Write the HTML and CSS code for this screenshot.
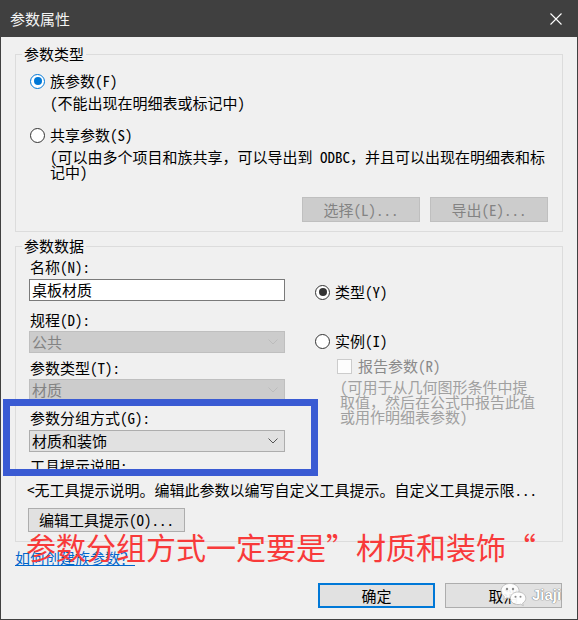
FILE: index.html
```html
<!DOCTYPE html>
<html lang="zh-CN">
<head>
<meta charset="utf-8">
<link rel="stylesheet" href="styles.css">
</head>
<body>
<div class="window">
  <div class="titlebar">
    <span class="title">参数属性</span>
    <svg class="close" width="12" height="12" viewBox="0 0 12 12"><path d="M0.5 0.5 L11.5 11.5 M11.5 0.5 L0.5 11.5" stroke="#ffffff" stroke-width="1.1" fill="none"/></svg>
  </div>
  <div class="content">
    <fieldset class="group g1">
      <legend>参数类型</legend>
      <div class="inner">
        <div class="radio-row"><span class="radio blue"><span class="dot"></span></span><span>族参数(F)</span></div>
        <div class="desc d1">(不能出现在明细表或标记中)</div>
        <div class="radio-row r2"><span class="radio"></span><span>共享参数(S)</span></div>
        <div class="desc d2">(可以由多个项目和族共享，可以导出到 ODBC，并且可以出现在明细表和标记中)</div>
        <div class="btn-row">
          <span class="btn disabled">选择(L)...</span>
          <span class="btn disabled">导出(E)...</span>
        </div>
      </div>
    </fieldset>
    <fieldset class="group g2">
      <legend>参数数据</legend>
      <div class="inner">
        <div class="data-grid">
          <div class="left-col">
            <div class="lbl l1">名称(N):</div>
            <div class="input">桌板材质</div>
            <div class="lbl l2">规程(D):</div>
            <div class="select disabled s1"><span>公共</span><svg width="10" height="6" viewBox="0 0 10 6"><polyline points="0.5,0.5 5,5 9.5,0.5" fill="none" stroke="#bcbcbc"/></svg></div>
            <div class="lbl l3">参数类型(T):</div>
            <div class="select disabled s2"><span>材质</span><svg width="10" height="6" viewBox="0 0 10 6"><polyline points="0.5,0.5 5,5 9.5,0.5" fill="none" stroke="#bcbcbc"/></svg></div>
            <div class="lbl l4">参数分组方式(G):</div>
            <div class="select s3"><span>材质和装饰</span><svg width="10" height="6" viewBox="0 0 10 6"><polyline points="0.5,0.5 5,5 9.5,0.5" fill="none" stroke="#555555"/></svg></div>
            <div class="lbl l5">工具提示说明:</div>
          </div>
          <div class="right-col">
            <div class="radio-row rr1"><span class="radio dark"><span class="dot"></span></span><span>类型(Y)</span></div>
            <div class="radio-row rr2"><span class="radio"></span><span>实例(I)</span></div>
            <div class="check-row"><span class="check"></span><span>报告参数(R)</span></div>
            <div class="note">(可用于从几何图形条件中提取值，然后在公式中报告此值或用作明细表参数)</div>
          </div>
        </div>
        <div class="tip">&lt;无工具提示说明。编辑此参数以编写自定义工具提示。自定义工具提示限...</div>
        <span class="btn edit">编辑工具提示(O)...</span>
      </div>
    </fieldset>
    <a class="help" href="#">如何创建族参数？</a>
    <div class="footer">
      <span class="btn ok">确定</span>
      <span class="btn cancel">取消</span>
    </div>
  </div>
  <div class="annot-rect"></div>
  <div class="annot-text">参数分组方式一定要是”材质和装饰“</div>
  <div class="watermark">
    <svg width="27" height="26" viewBox="0 0 27 26">
      <path d="M10 1.5 C4.8 1.5 1 4.8 1 8.8 C1 11.2 2.3 13.2 4.4 14.6 L3.6 17.4 L6.8 15.8 C7.8 16.1 8.9 16.2 10 16.2 C15.2 16.2 19 12.9 19 8.8 C19 4.8 15.2 1.5 10 1.5 Z" fill="#ffffff" fill-opacity="0.92" stroke="#b5b5b5" stroke-width="0.8"/>
      <path d="M18 10 C13.6 10 10.4 12.8 10.4 16.3 C10.4 19.8 13.6 22.6 18 22.6 C18.9 22.6 19.8 22.5 20.6 22.2 L23.3 23.6 L22.6 21.2 C24.6 20 25.8 18.3 25.8 16.3 C25.8 12.8 22.5 10 18 10 Z" fill="#ffffff" fill-opacity="0.95" stroke="#b5b5b5" stroke-width="0.8"/>
      <circle cx="7" cy="7" r="1.2" fill="#8a8a8a"/>
      <circle cx="13" cy="7" r="1.2" fill="#8a8a8a"/>
      <circle cx="15.5" cy="14.8" r="1" fill="#8a8a8a"/>
      <circle cx="20.5" cy="14.8" r="1" fill="#8a8a8a"/>
    </svg>
    <span class="wm-text">Jiaji</span>
  </div>
</div>
</body>
</html>
```
FILE: styles.css
```css
* { box-sizing: border-box; }
html, body { margin: 0; padding: 0; }
body {
  font-family: "Noto Sans Mono CJK SC", "Noto Sans CJK SC", sans-serif;
  font-size: 15px;
  line-height: 16px;
  color: #000;
  background: #f0f0f0;
}
.window {
  position: relative;
  width: 578px;
  height: 620px;
  border: 1px solid #404040;
  background: #f0f0f0;
  display: flex;
  flex-direction: column;
  overflow: hidden;
}
.titlebar {
  height: 36px;
  flex: none;
  background: #404040;
  color: #f4f4f4;
  display: flex;
  align-items: center;
  justify-content: space-between;
  padding: 0 15px 0 9px;
}
.close { display: block; }
.content { flex: 1; display: flex; flex-direction: column; }

.group {
  margin: 0 14px 0 14px;
  padding: 0;
  border: 1px solid #dcdcdc;
  min-width: 0;
}
.group legend { margin-left: 6px; padding: 0 2px; line-height: 16px; }
.g1 { margin-top: 9px; }
.g1 .inner { padding: 11px 14px 9px 14px; }
.g2 { margin-top: 6px; }
.g2 .inner { padding: 5px 0 9px 13px; }

.radio-row { display: flex; align-items: center; gap: 5px; height: 16px; }
.radio {
  width: 15px; height: 15px; border-radius: 50%;
  border: 1px solid #333; background: #fff; flex: none;
  display: flex; align-items: center; justify-content: center;
}
.radio .dot { width: 8px; height: 8px; border-radius: 50%; background: #333; }
.radio.blue { border-color: #0078d7; }
.radio.blue .dot { background: #0078d7; }

.desc { margin-left: 20px; }
.d1 { margin-top: 6px; }
.r2 { margin-top: 16px; }
.d2 { margin-top: 6px; line-height: 15px; width: 505px; }

.btn-row { display: flex; justify-content: flex-end; gap: 10px; margin-top: 18px; }
.btn {
  display: flex; align-items: center; justify-content: center;
  height: 25px; border: 1px solid #adadad; background: #e1e1e1; color: #000;
}
.btn.disabled { width: 118px; background: #cccccc; border-color: #bfbfbf; color: #838383; }

.data-grid { display: flex; align-items: flex-start; }
.left-col { width: 256px; flex: none; display: flex; flex-direction: column; }
.lbl { margin-left: 1px; height: 16px; }
.l2 { margin-top: 11px; }
.l3 { margin-top: 7px; }
.l4 { margin-top: 9px; }
.l5 { margin-top: 6px; }
.input {
  margin-top: 4px; height: 22px; border: 1px solid #7a7a7a; background: #fff;
  padding-left: 2px; line-height: 20px;
}
.select {
  height: 22px; border: 1px solid #adadad; background: #e1e1e1;
  display: flex; align-items: center; justify-content: space-between;
  padding: 0 6px 0 2px;
}
.select.disabled { background: #cccccc; border-color: #bfbfbf; color: #838383; }
.s1, .s2 { margin-top: 3px; }
.s3 { margin-top: 4px; }

.right-col { margin-left: 30px; display: flex; flex-direction: column; }
.rr1 { margin-top: 25px; }
.rr2 { margin-top: 33px; }
.check-row { margin-top: 9px; margin-left: 22px; display: flex; align-items: center; gap: 6px; height: 16px; color: #8a8a8a; }
.check { width: 15px; height: 15px; border: 1px solid #cccccc; background: #fdfdfd; flex: none; }
.note { margin-top: 5px; margin-left: 25px; width: 197px; line-height: 15px; color: #a0a0a0; }

.tip { margin-top: 8px; margin-left: -2px; white-space: nowrap; }
.btn.edit { margin-top: 10px; width: 157px; height: 24px; margin-left: -1px; }

.help {
  margin: 8px 0 0 14px; align-self: flex-start; color: #0066cc;
  text-decoration: underline; line-height: 16px;
}
.footer { display: flex; justify-content: flex-end; gap: 10px; margin-top: 17px; padding-right: 15px; }
.btn.ok { width: 117px; border: 2px solid #0078d7; }
.btn.cancel { width: 117px; }

.annot-rect {
  position: absolute; left: 2px; top: 398px; width: 315px; height: 77px;
  border: 7px solid #3a5bd3;
}
.annot-text {
  position: absolute; left: 25px; top: 530px;
  font-family: "Noto Sans CJK SC", sans-serif;
  font-size: 30px; line-height: 30px; color: #f83a3a; white-space: nowrap;
}
.watermark {
  position: absolute; left: 499px; top: 581px;
  display: flex; align-items: center; gap: 5px;
}
.watermark svg { display: block; }
.wm-text {
  font-family: "Liberation Sans", sans-serif; font-weight: bold; font-size: 15px;
  color: #ffffff; text-shadow: 0 0 1px #666, 0 0 1px #666;
}
```
